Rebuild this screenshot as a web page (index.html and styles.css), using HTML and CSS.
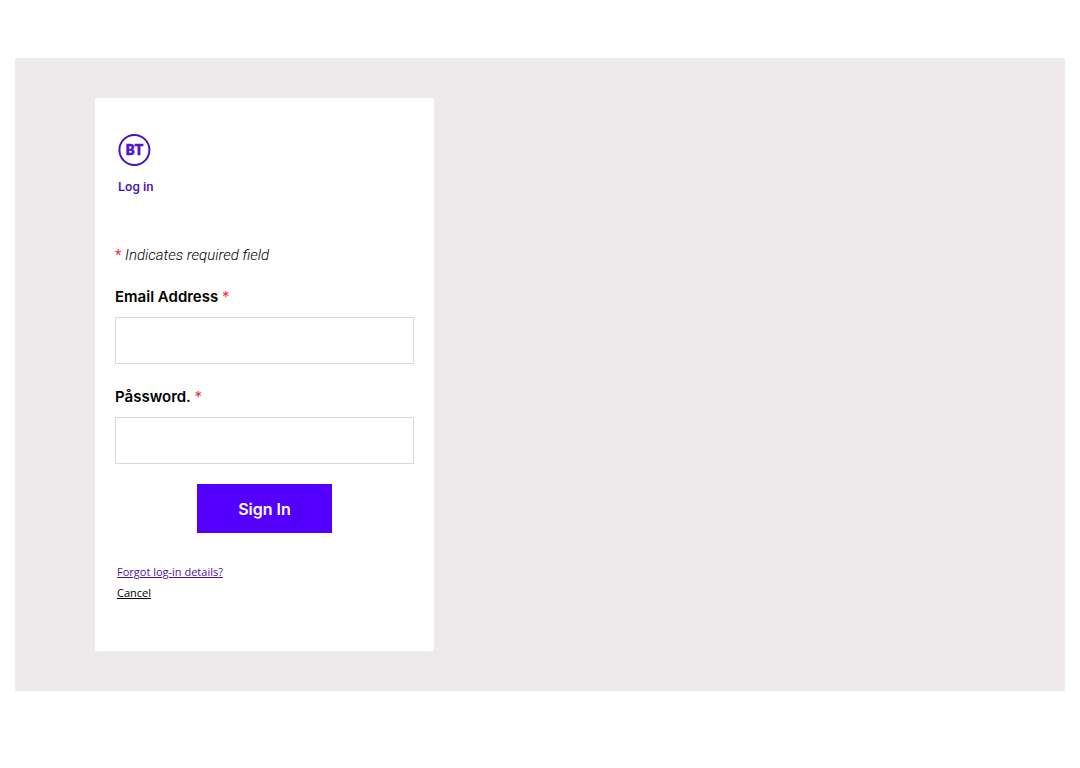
FILE: index.html
```html
<!DOCTYPE html>
<html lang="en">
<head>
    <meta charset="UTF-8">
    <meta name="viewport" content="width=device-width, initial-scale=1.0">
    <title>Log in</title>
    <link rel="stylesheet" href="styles.css">
</head>
<body>
    <main class="section">
        <div class="card">
            <!-- Logo and heading -->
            <div class="brand">
                <svg class="logo" viewBox="0 0 34 34" role="img" aria-label="BT">
                    <circle cx="16.4" cy="17" r="15" fill="none" stroke="#4c12b8" stroke-width="2"/>
                    <text class="logo-text" x="16.6" y="22" text-anchor="middle">BT</text>
                </svg>
                <h1>Log in</h1>
            </div>

            <form class="login-form">
                <p class="hint"><span class="required">*</span> Indicates required field</p>

                <div class="field">
                    <label for="email">Email Address <span class="required">*</span></label>
                    <input type="text" id="email">
                </div>
                <div class="field">
                    <label for="password">Påssword. <span class="required">*</span></label>
                    <input type="password" id="password">
                </div>

                <button type="button" class="sign-in">Sign In</button>
            </form>

            <div class="links">
                <a href="#" class="forgot">Forgot log-in details?</a>
                <a href="#" class="cancel">Cancel</a>
            </div>
        </div>
    </main>
</body>
</html>
```
FILE: styles.css
```css
* {
    box-sizing: border-box;
}
body {
    margin: 0;
    padding: 58px 15px;
    font-family: Inter, "Liberation Sans", sans-serif;
    font-size: 14px;
    color: #000;
    background-color: #fff;
}
.section {
    padding: 40px 80px;
    background-color: #eeeaeb;
}
.card {
    max-width: 339px;
    padding: 35px 20px 48px;
    background-color: #fff;
}
.brand {
    padding-left: 3px;
}
.logo {
    display: block;
    width: 34px;
    height: 34px;
}
.logo-text {
    font-family: Roboto, sans-serif;
    font-size: 14px;
    font-weight: 900;
    fill: #5514c8;
    stroke: #5514c8;
    stroke-width: 0.4;
}
h1 {
    margin: 10px 0 0;
    font-family: Roboto, sans-serif;
    font-size: 13px;
    font-weight: 500;
    line-height: 20px;
    color: #4c12b0;
}
.login-form {
    display: flex;
    flex-direction: column;
}
.hint {
    margin: 47px 0 18px;
    font-family: Roboto, sans-serif;
    font-size: 15px;
    font-style: italic;
    font-weight: 300;
    line-height: 22px;
}
.field {
    display: flex;
    flex-direction: column;
    margin-bottom: 20px;
}
.field label {
    margin-bottom: 8px;
    font-size: 15px;
    font-weight: 600;
    line-height: 25px;
}
.required {
    font-style: normal;
    font-weight: 400;
    color: #f03030;
}
.field input {
    width: 100%;
    height: 47px;
    padding: 8px 12px;
    border: 1px solid #d8d8d8;
    font-size: 14px;
}
.sign-in {
    align-self: center;
    height: 49px;
    padding: 0 41px;
    border: none;
    font-family: Inter, sans-serif;
    font-size: 16px;
    font-weight: 600;
    color: #fff;
    background-color: #5500ff;
    cursor: pointer;
}
.links {
    display: flex;
    flex-direction: column;
    align-items: flex-start;
    margin-top: 28px;
    padding-left: 2px;
    font-family: "Open Sans", sans-serif;
    font-size: 11px;
    line-height: 21px;
}
.forgot {
    color: #4c12a8;
}
.cancel {
    color: #000;
}
```
